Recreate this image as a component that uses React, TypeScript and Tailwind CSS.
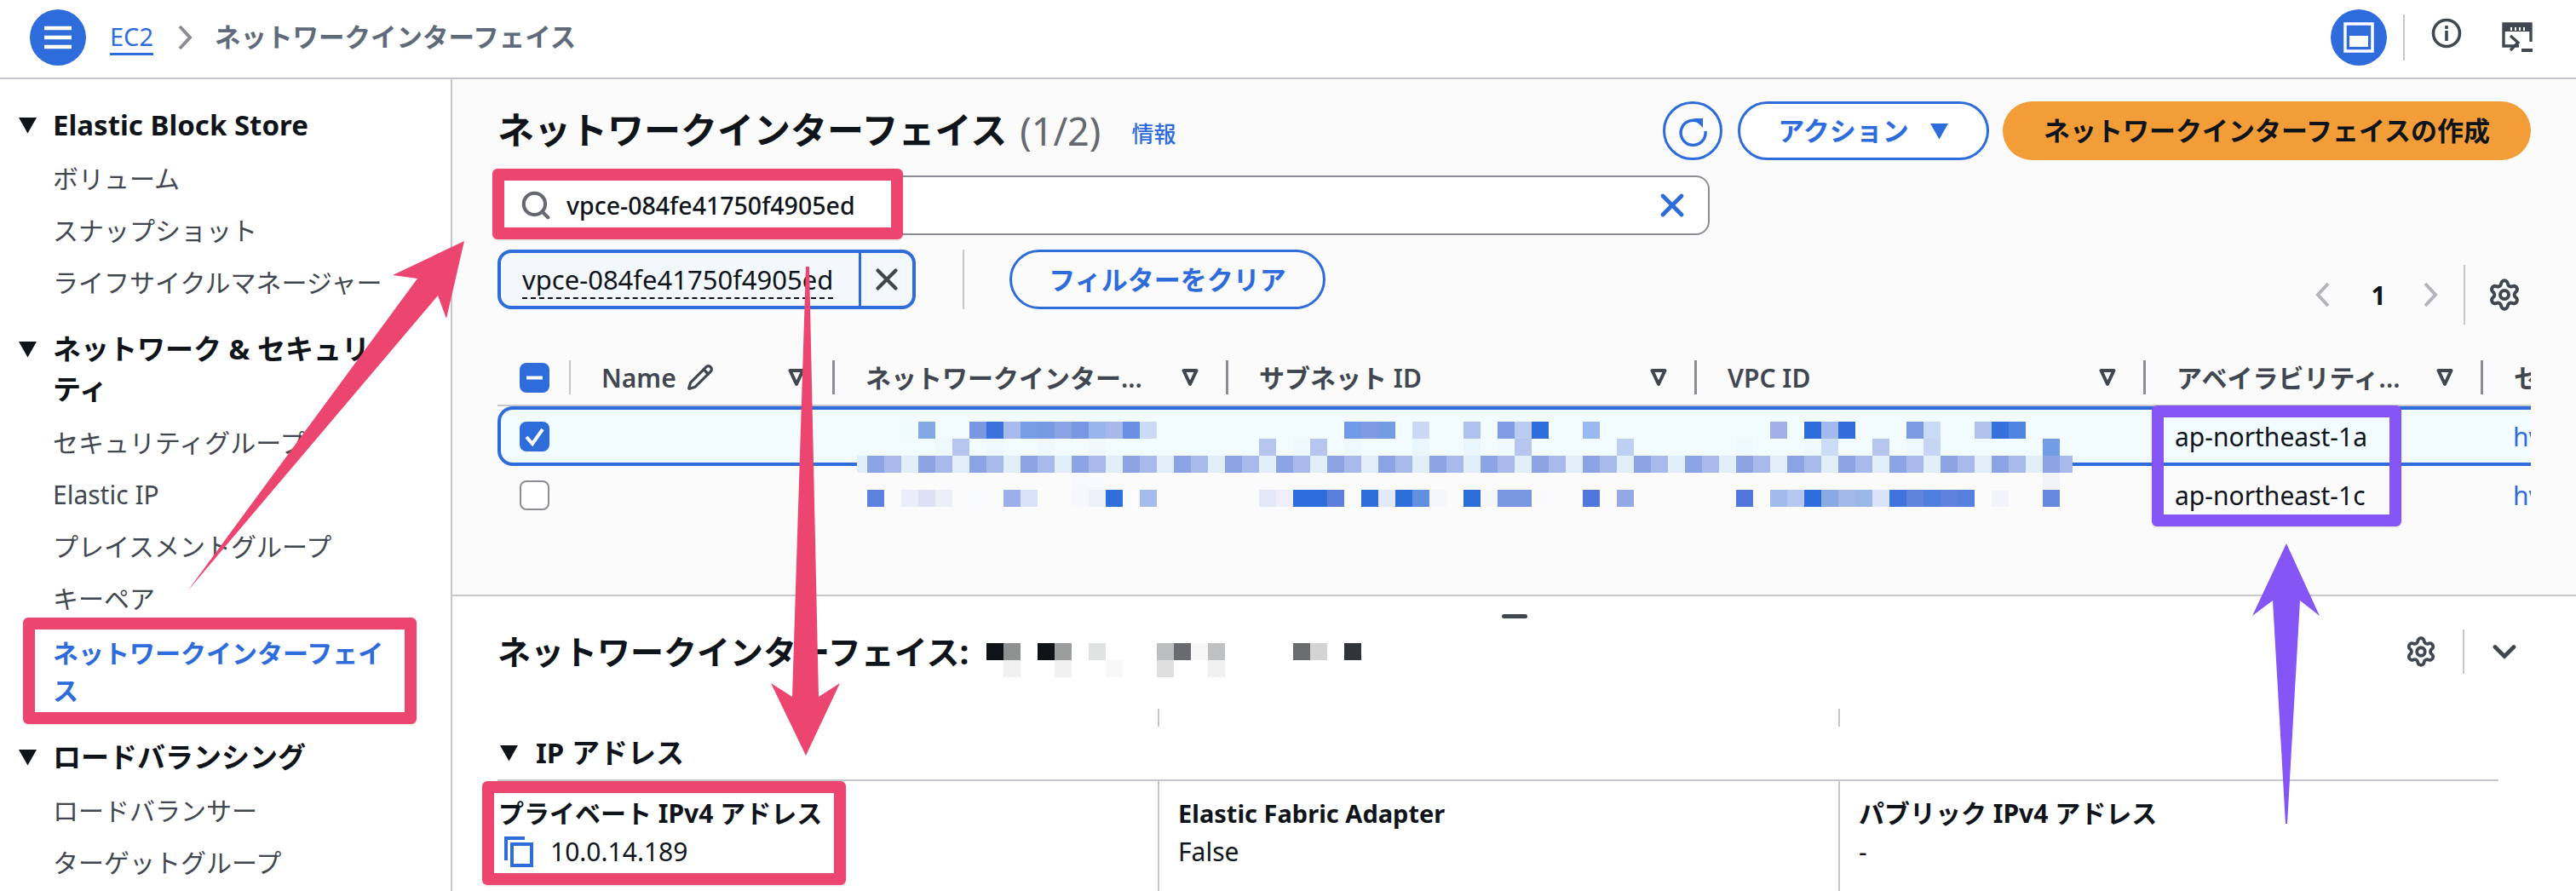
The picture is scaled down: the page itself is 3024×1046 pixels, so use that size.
import React from "react";
import { ChevronDown, Pencil, Search, Settings, X } from "lucide-react";

const tableRows: Record<number, string> = {
  0: "2:#effbff 3:#82a8e8 6:#7a98e2 7:#3c72dc 8:#a8b9ec 9:#789ee6 10:#789ae4 11:#8ba4e4 12:#7798e0 13:#98b5ec 14:#a8b8ea 15:#698fe2 16:#cbdaf5 28:#7099e6 29:#809ae4 30:#739ce4 32:#cbd8f5 35:#b0c2f0 37:#7f9ce5 38:#bccbf0 39:#2e6cdb 42:#98baf0 53:#a0b0e8 55:#2e6cdb 56:#a4baec 57:#326edb 61:#7c9ae4 62:#c8daf5 65:#b0c2ee 66:#3670dc 67:#4c84e0",
  1: "4:#f0f8ff 5:#b6c6ee 7:#eff8ff 10:#eff8ff 13:#f0f8fe 23:#b6c6ee 25:#f0f8ff 26:#b6c6ee 28:#f0f8ff 32:#eaf6fe 35:#eaf7fe 37:#f0f9ff 38:#b6c6ee 44:#bdd0f2 51:#edf8ff 55:#f0f8ff 56:#cadcf6 59:#b6c6ee 61:#f0f8ff 62:#c6d5f3 69:#739ce6",
  3: "12:#f8f9fe 13:#f9fafe 69:#f2f3fa",
  4: "0:#5c82e0 2:#eaeefa 3:#dce1f5 4:#eceffa 6:#fafbfe 8:#9bb0e8 9:#d8e2f6 12:#f6f8fd 13:#eef1f9 14:#2e6fdb 15:#fafcff 16:#a4bbec 23:#e4e9f8 24:#eeeffa 25:#2d6cdb 26:#2d6cdb 27:#5b7edc 29:#2f6ddb 30:#e4e9f8 31:#2d6cdb 32:#6290e0 33:#f6f7fd 35:#2d6cdb 36:#f6f7fd 37:#7997e3 38:#7997e3 39:#fafafd 42:#5078dc 44:#92a9e6 51:#5078dc 53:#a0bbec 54:#b4c8f0 55:#2d6cdb 56:#8aaae4 57:#a4b9ea 58:#9bb7ea 59:#dbe3f6 60:#3e74dc 61:#5f84dc 62:#5080de 63:#5f80dc 64:#5580de 66:#f2f3fb 69:#688ade",
};
const nameRows: Record<number, string> = {
  0: "0:#0f1318 1:#8f9190 3:#0f1318 4:#9c9e9d 6:#e0e2e1 10:#bdbec0 11:#6a6b6f 12:#f7f7f7 13:#bfc0c2 18:#6b6c6e 19:#d4d4d4 21:#31353a",
  1: "1:#f0f0f0 4:#f1f1f1 7:#f8f8f8 10:#dfdfdf 13:#f0f0f0",
};
const stripe = ["#8ca4e4", "#a8baec", "#e2eefa"];

function Cells({ rows }: { rows: Record<number, string> }) {
  return (
    <>
      {Object.entries(rows).map(([row, list]) =>
        list.split(" ").map((cell) => {
          const [col, color] = cell.split(":");
          return <rect key={row + col} x={Number(col) * 20} y={Number(row) * 20} width="20" height="20" fill={color} />;
        })
      )}
    </>
  );
}

// pixelated ids over the table rows
function TableMosaic() {
  const cols = Array.from({ length: 71 }, (_, i) => i);
  return (
    <svg className="absolute left-[1006px] top-[495px]" width="1428" height="100" viewBox="-12 0 1428 100" shapeRendering="crispEdges">
      <rect x="-12" y="40" width="12" height="20" fill={stripe[2]} />
      {cols.map((c) => (
        <rect key={c} x={c * 20} y="40" width={c === 70 ? 15 : 20} height="20" fill={stripe[c % 3]} />
      ))}
      <Cells rows={tableRows} />
    </svg>
  );
}

function FilterTriangle() {
  return (
    <svg width="20" height="22" viewBox="0 0 20 22" className="shrink-0">
      <path d="M2.5 3h15L10 19z" fill="none" stroke="#414750" strokeWidth="4" strokeLinejoin="round" />
    </svg>
  );
}

function SolidTriangle({ color = "#0f141a" }: { color?: string }) {
  return (
    <svg width="23" height="20" viewBox="0 0 23 20" className="shrink-0">
      <path d="M1 1h21L11.5 19.5z" fill={color} />
    </svg>
  );
}

function ThinChevron({ left, className }: { left?: boolean; className: string }) {
  return (
    <svg width="18" height="30" viewBox="0 0 18 30" className={className}>
      <path d={left ? "M15 2L3 15l12 13" : "M3 2l12 13L3 28"} fill="none" stroke="currentColor" strokeWidth="4" />
    </svg>
  );
}

function CheckBox({ state }: { state: "none" | "some" | "all" }) {
  if (state === "none") return <div className="h-[35px] w-[35px] rounded-[8px] border-2 border-[#8c8c94] bg-white" />;
  return (
    <div className="flex h-[35px] w-[35px] items-center justify-center rounded-[8px] bg-[#2e6cdb]">
      <svg width="35" height="35" viewBox="0 0 35 35">
        {state === "some" ? (
          <path d="M8 17.5h19" stroke="#fff" strokeWidth="4" />
        ) : (
          <path d="M8 18l7 8 12-17" fill="none" stroke="#fff" strokeWidth="4" />
        )}
      </svg>
    </div>
  );
}

function HeaderCell({ w, label, first, pencil }: { w: string; label: string; first?: boolean; pencil?: boolean }) {
  return (
    <div className={`${w} flex h-[40px] shrink-0 items-center justify-between pl-[36px] pr-[32px] ${first ? "border-l-2 border-[#c6c6cd]" : "border-l-[3px] border-[#8c8c94]"}`}>
      <div className="flex items-center gap-[12px] whitespace-nowrap text-[30px] font-semibold text-[#414750]">
        {label}
        {pencil && <Pencil size={32} strokeWidth={2.4} />}
      </div>
      <FilterTriangle />
    </div>
  );
}

function TableRow({ selected, az, link }: { selected?: boolean; az: string; link: string }) {
  return (
    <div className={`flex w-[2420px] items-center ${selected ? "h-[70px] rounded-l-[18px] border-y-[4px] border-l-[4px] border-[#2e6cdb] bg-[#f2fbff]" : "h-[68px]"}`}>
      <div className={`shrink-0 ${selected ? "w-[80px] pl-[22px]" : "w-[84px] pl-[26px]"}`}>
        <CheckBox state={selected ? "all" : "none"} />
      </div>
      <div className="w-[1848px] shrink-0" />
      <div className="w-[396px] shrink-0 pl-[37px] text-[30px] text-[#0f141a]">{az}</div>
      <div className="pl-[38px] text-[30px] text-[#2e6cdb]">{link}</div>
    </div>
  );
}

function SideItem({ children, active }: { children: React.ReactNode; active?: boolean }) {
  return <div className={`py-[8.5px] pl-[62px] text-[30px] leading-[44px] ${active ? "mt-[3px] font-semibold text-[#2e6cdb]" : "text-[#414750]"}`}>{children}</div>;
}

function SideHeading({ children, first }: { children: React.ReactNode; first?: boolean }) {
  return (
    <div className={`relative mb-[9px] pl-[62px] text-[33px] font-bold leading-[47px] text-[#0f141a] ${first ? "" : "mt-[24px]"}`}>
      <span className="absolute left-[21px] top-[14px]">
        <SolidTriangle />
      </span>
      {children}
    </div>
  );
}

function DetailCell({ label, children, first, small }: { label: string; children: React.ReactNode; first?: boolean; small?: boolean }) {
  return (
    <div className={`pt-[18px] ${first ? "pl-px" : "border-l-2 border-[#c6c6cd] pl-[22px]"}`}>
      <div className={`font-bold leading-[40px] text-[#0f141a] ${small ? "text-[29px]" : "text-[30px]"}`}>{label}</div>
      <div className="mt-[3px] flex items-center text-[30px] leading-[44px] text-[#0f141a]">{children}</div>
    </div>
  );
}

export default function App() {
  return (
    <div className="relative h-[1046px] w-[3024px] overflow-hidden bg-white [font-family:'Noto_Sans','Noto_Sans_CJK_JP',sans-serif]">
      {/* top bar */}
      <header className="flex h-[93px] items-center border-b-2 border-[#c6c6cd] pb-[3px] pl-[35px] pr-[51px]">
        <div className="flex h-[66px] w-[66px] items-center justify-center rounded-full bg-[#2e6cdb]">
          <svg width="32" height="28" viewBox="0 0 32 28">
            <path d="M0 3h32M0 14h32M0 25h32" stroke="#fff" strokeWidth="4.5" />
          </svg>
        </div>
        <a className="ml-[28px] border-b-[3px] border-[#2e6cdb] text-[29px] leading-[38px] text-[#2e6cdb]">EC2</a>
        <ThinChevron className="ml-[28px] text-[#8c8c94]" />
        <span className="ml-[26px] text-[30.5px] font-semibold text-[#5f6b7a]">ネットワークインターフェイス</span>
        <div className="ml-auto flex h-[66px] w-[66px] items-center justify-center rounded-full bg-[#2e6cdb]">
          <svg width="36" height="36" viewBox="0 0 36 36">
            <rect x="2" y="2" width="32" height="32" fill="none" stroke="#fff" strokeWidth="3.5" />
            <rect x="7" y="16" width="22" height="13" fill="#fff" />
          </svg>
        </div>
        <div className="ml-[19px] h-[54px] w-[2px] bg-[#c6c6cd]" />
        <svg className="ml-[31px] -mt-[10px]" width="36" height="36" viewBox="0 0 36 36">
          <circle cx="18" cy="18" r="15.5" fill="none" stroke="#414750" strokeWidth="3.6" />
          <path d="M18 15v12M18 9v4" stroke="#414750" strokeWidth="3.6" />
        </svg>
        <svg className="ml-[47px]" width="36" height="36" viewBox="0 0 36 36">
          <path d="M20 28H2V2h32v21" fill="none" stroke="#414750" strokeWidth="3.4" />
          <path d="M2 2h32v9H2z" fill="#414750" />
          <path d="M11 6v4M16 6v4M21 6v4M26 6v4" stroke="#fff" strokeWidth="2" />
          <path d="M10 16l9 8-9 9" fill="none" stroke="#414750" strokeWidth="3.4" />
          <path d="M23 33h13" stroke="#414750" strokeWidth="4" />
        </svg>
      </header>

      <div className="flex h-[953px]">
        {/* side nav */}
        <nav className="w-[531px] shrink-0 border-r-2 border-[#c6c6cd] pt-[30px]">
          <SideHeading first>Elastic Block Store</SideHeading>
          <SideItem>ボリューム</SideItem>
          <SideItem>スナップショット</SideItem>
          <SideItem>ライフサイクルマネージャー</SideItem>
          <SideHeading>
            ネットワーク &amp; セキュリ
            <br />
            ティ
          </SideHeading>
          <SideItem>セキュリティグループ</SideItem>
          <SideItem>Elastic IP</SideItem>
          <SideItem>プレイスメントグループ</SideItem>
          <SideItem>キーペア</SideItem>
          <SideItem active>
            ネットワークインターフェイ
            <br />ス
          </SideItem>
          <SideHeading>ロードバランシング</SideHeading>
          <SideItem>ロードバランサー</SideItem>
          <SideItem>ターゲットグループ</SideItem>
        </nav>

        <main className="flex min-w-0 flex-1 flex-col">
          {/* list panel */}
          <section className="h-[605px] shrink-0 bg-[#fbfbfb] pl-[53px] pt-[26px]">
            <div className="flex h-[69px] items-center pr-[53px]">
              <h1 className="text-[43px] font-bold text-[#0f141a]">ネットワークインターフェイス</h1>
              <span className="ml-[15px] text-[45px] text-[#656871]">(1/2)</span>
              <span className="ml-[36px] mt-[8px] text-[26px] font-medium text-[#2e6cdb]">情報</span>
              <div className="ml-auto flex h-[69px] w-[70px] items-center justify-center rounded-full border-[3px] border-[#2e6cdb]">
                <svg width="36" height="36" viewBox="0 0 36 36">
                  <path d="M27 8a14.5 14.5 0 1 0 6 10" fill="none" stroke="#2e6cdb" strokeWidth="3.4" />
                  <path d="M19 3l11 0 0 11z" fill="#2e6cdb" />
                </svg>
              </div>
              <button className="ml-[18px] flex h-[69px] w-[295px] items-center justify-center gap-[24px] rounded-full border-[3px] border-[#2e6cdb] bg-white text-[31px] font-semibold text-[#2e6cdb]">
                アクション
                <SolidTriangle color="#2e6cdb" />
              </button>
              <button className="ml-[16px] flex h-[69px] w-[620px] items-center justify-center rounded-full bg-[#f29d38] text-[31px] font-semibold text-[#0f141a]">
                ネットワークインターフェイスの作成
              </button>
            </div>

            <div className="mt-[18px] flex h-[70px] w-[1423px] items-center rounded-[16px] border-2 border-[#8c8c94] bg-white pl-[24px] pr-[20px]">
              <Search size={38} strokeWidth={2.6} className="text-[#656871]" />
              <span className="ml-[17px] text-[28.5px] font-medium text-[#0f141a]">vpce-084fe41750f4905ed</span>
              <X size={44} strokeWidth={2.6} className="ml-auto text-[#2e6cdb]" />
            </div>

            <div className="mt-[17px] flex h-[88px] items-start pr-[64px]">
              <div className="flex h-[70px] w-[491px] overflow-hidden rounded-[16px] border-[4px] border-[#2e6cdb] bg-[#f2f8fd]">
                <div className="w-[420px] shrink-0 pl-[25px] pt-[12px]">
                  <span className="border-b-2 border-dashed border-[#0f141a] text-[31px] leading-[38px] text-[#0f141a]">vpce-084fe41750f4905ed</span>
                </div>
                <div className="flex flex-1 items-center justify-center border-l-[3px] border-[#2e6cdb]">
                  <X size={42} strokeWidth={2.4} className="text-[#414750]" />
                </div>
              </div>
              <div className="ml-[55px] h-[70px] w-[2px] bg-[#c6c6cd]" />
              <button className="ml-[53px] h-[70px] w-[371px] rounded-full border-[3px] border-[#2e6cdb] text-[31px] font-semibold text-[#2e6cdb]">フィルターをクリア</button>
              <div className="ml-auto mt-[18px] flex h-[70px] items-center">
                <ThinChevron left className="text-[#b4b4bb]" />
                <span className="ml-[36px] w-[40px] text-center text-[30px] font-bold text-[#0f141a]">1</span>
                <ThinChevron className="ml-[32px] text-[#b4b4bb]" />
                <div className="ml-[30px] h-[70px] w-[2px] bg-[#c6c6cd]" />
                <Settings size={40} strokeWidth={2.4} className="ml-[26px] text-[#414750]" />
              </div>
            </div>

            {/* table */}
            <div className="mt-[30px] w-[2387px] overflow-hidden">
              <div className="flex h-[66px] w-[2420px] items-center border-b-2 border-[#c6c6cd]">
                <div className="w-[84px] shrink-0 pl-[26px]">
                  <CheckBox state="some" />
                </div>
                <HeaderCell w="w-[309px]" label="Name" first pencil />
                <HeaderCell w="w-[462px]" label="ネットワークインター..." />
                <HeaderCell w="w-[550px]" label="サブネット ID" />
                <HeaderCell w="w-[527px]" label="VPC ID" />
                <HeaderCell w="w-[396px]" label="アベイラビリティ..." />
                <HeaderCell w="w-[92px]" label="セ" />
              </div>
              <TableRow selected az="ap-northeast-1a" link="hv" />
              <TableRow az="ap-northeast-1c" link="hv" />
            </div>
          </section>

          {/* detail panel */}
          <section className="flex-1 border-t-2 border-[#c6c6cd] bg-white">
            <div className="mx-auto mt-[21px] h-[5px] w-[30px] rounded-full bg-[#414750]" />
            <div className="mt-[13px] flex h-[52px] items-center pl-[53px] pr-[62px]">
              <h2 className="text-[39px] font-bold text-[#0f141a]">ネットワークインターフェイス:</h2>
              <Settings size={38} strokeWidth={2.4} className="ml-auto text-[#414750]" />
              <div className="ml-[30px] h-[52px] w-[2px] bg-[#c6c6cd]" />
              <ChevronDown size={44} strokeWidth={2.6} className="ml-[25px] text-[#414750]" />
            </div>
            <div className="ml-[53px] mt-[41px] grid h-[21px] w-[2349px] grid-cols-[775px_799px_1fr]">
              <div />
              <div className="border-l-2 border-[#c6c6cd]" />
              <div className="border-l-2 border-[#c6c6cd]" />
            </div>
            <div className="ml-[55px] flex h-[62px] items-center gap-[20px] text-[33px] font-bold text-[#0f141a]">
              <SolidTriangle />
              IP アドレス
            </div>
            <div className="ml-[53px] grid h-[200px] w-[2349px] grid-cols-[775px_799px_1fr] border-t-2 border-[#c6c6cd]">
              <DetailCell label="プライベート IPv4 アドレス" first>
                <svg className="ml-[7px] mr-[20px]" width="34" height="36" viewBox="0 0 34 36">
                  <path d="M24 2H2v26" fill="none" stroke="#2e6cdb" strokeWidth="4" />
                  <rect x="9" y="9" width="23" height="25" fill="none" stroke="#2e6cdb" strokeWidth="4" />
                </svg>
                10.0.14.189
              </DetailCell>
              <DetailCell label="Elastic Fabric Adapter" small>False</DetailCell>
              <DetailCell label="パブリック IPv4 アドレス">-</DetailCell>
            </div>
          </section>
        </main>
      </div>

      <TableMosaic />
      <svg className="absolute left-[1158px] top-[755px]" width="440" height="40" viewBox="0 0 440 40" shapeRendering="crispEdges">
        <Cells rows={nameRows} />
      </svg>

      {/* annotation boxes and arrows drawn on top of the shot */}
      <div className="absolute left-[578px] top-[198px] h-[83px] w-[482px] rounded-[6px] border-[14px] border-[#ec4670] shadow-sm" />
      <div className="absolute left-[27px] top-[725px] h-[125px] w-[462px] rounded-[6px] border-[14px] border-[#ec4670] shadow-sm" />
      <div className="absolute left-[566px] top-[917px] h-[122px] w-[427px] rounded-[6px] border-[14px] border-[#ec4670] shadow-sm" />
      <div className="absolute left-[2526px] top-[476px] h-[142px] w-[293px] rounded-[6px] border-[14px] border-[#8555f5] shadow-sm" />
      <svg className="absolute left-0 top-0" width="3024" height="1046" viewBox="0 0 3024 1046">
        <polygon points="220,694 490,327 461,323 545,283 524,374 514,347" fill="#ec4670" />
        <polygon points="946,313 950,313 961,818 986,802 946,887 905,802 930,818" fill="#ec4670" />
        <polygon points="2684,638 2723,723 2700,705 2685,967 2683,967 2668,705 2644,723" fill="#8555f5" />
      </svg>
    </div>
  );
}
